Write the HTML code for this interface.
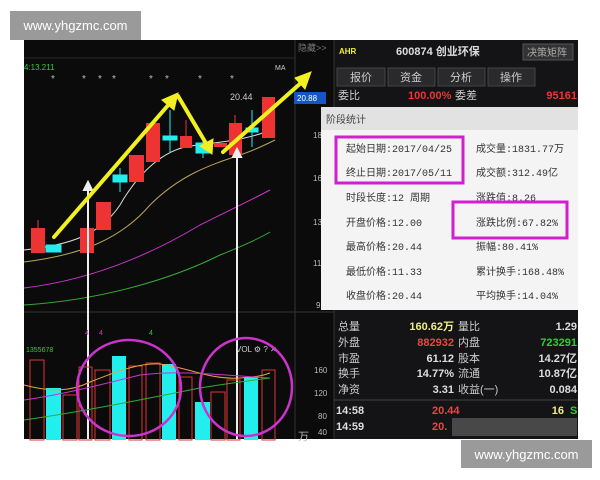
<!DOCTYPE html>
<html><head><meta charset="utf-8"><style>
body{margin:0;width:600px;height:480px;background:#fff;overflow:hidden;position:relative;font-family:"Liberation Sans","Noto Sans CJK SC",sans-serif}
.wm{position:absolute;background:#9a9a9a;color:#fff;font-size:13px;display:flex;align-items:center;justify-content:center}
svg{position:absolute;left:0;top:0}
</style></head><body>
<div class="wm" style="left:10px;top:11px;width:131px;height:29px">www.yhgzmc.com</div>
<svg width="600" height="480" viewBox="0 0 600 480" font-family="Liberation Sans, Noto Sans CJK SC, sans-serif">
<rect x="24" y="40" width="554" height="399" fill="#0b0b0c"/>
<rect x="334" y="40" width="244" height="399" fill="#141416"/>
<line x1="295" y1="40" x2="295" y2="439" stroke="#333" />
<line x1="334" y1="40" x2="334" y2="439" stroke="#333" />
<line x1="24" y1="58" x2="295" y2="58" stroke="#2a2a2a"/>
<line x1="24" y1="312" x2="334" y2="312" stroke="#333"/>
<!-- top chart texts -->
<text x="24" y="70" fill="#3c3" font-size="8">4:13.211</text>
<text x="275" y="70" fill="#ccc" font-size="7">MA</text>
<g fill="#bbb" font-size="10"><text x="51" y="82">*</text><text x="82" y="82">*</text><text x="98" y="82">*</text><text x="112" y="82">*</text><text x="149" y="82">*</text><text x="165" y="82">*</text><text x="198" y="82">*</text><text x="230" y="82">*</text></g>
<text x="230" y="100" fill="#ccc" font-size="9">20.44</text>
<!-- MA lines -->
<path d="M24 250 C70 245 100 235 120 205 C140 170 165 150 190 146 C220 142 250 140 275 128" stroke="#ddd" fill="none" stroke-width="1"/>
<path d="M24 262 C80 255 120 240 150 205 C180 175 210 165 240 155 C255 150 265 145 275 140" stroke="#b9a25a" fill="none"/>
<path d="M24 288 C90 280 150 255 200 225 C230 210 255 198 270 190" stroke="#c3c" fill="none"/>
<path d="M24 305 C100 300 170 280 220 255 C245 245 260 238 270 232" stroke="#3a3" fill="none"/>
<!-- candles -->
<g fill="#e33">
<rect x="31" y="228" width="14" height="25"/><line x1="38" y1="220" x2="38" y2="228" stroke="#e33"/>
<rect x="80" y="228" width="14" height="25"/>
<rect x="96" y="202" width="15" height="28"/>
<rect x="129" y="155" width="15" height="27"/>
<rect x="146" y="123" width="14" height="39"/>
<rect x="180" y="136" width="12" height="12"/><line x1="186" y1="120" x2="186" y2="148" stroke="#e33"/>
<rect x="214" y="143" width="13" height="4"/>
<rect x="229" y="123" width="13" height="32"/><line x1="235" y1="115" x2="235" y2="123" stroke="#e33"/>
<rect x="262" y="97" width="13" height="41"/>
</g>
<g fill="#2ee" stroke="#2ee">
<rect x="46" y="245" width="15" height="7"/>
<line x1="120" y1="168" x2="120" y2="192"/><rect x="113" y="175" width="14" height="7"/>
<line x1="170" y1="110" x2="170" y2="153"/><rect x="163" y="136" width="14" height="4"/>
<rect x="196" y="143" width="14" height="10"/><line x1="203" y1="140" x2="203" y2="158"/>
<line x1="252" y1="110" x2="252" y2="147"/><rect x="246" y="128" width="12" height="4"/>
</g>
<!-- white arrows -->
<g stroke="#eee" stroke-width="2" fill="#eee">
<line x1="88" y1="188" x2="88" y2="439"/><path d="M84 190 L88 182 L92 190Z"/>
<line x1="237" y1="155" x2="237" y2="439"/><path d="M233 157 L237 149 L241 157Z"/>
</g>
<!-- yellow arrows -->
<g stroke="#f2f020" stroke-width="4" fill="#f2f020" stroke-linecap="round">
<line x1="54" y1="237" x2="170" y2="103"/><path d="M162 100 L178 93 L174 110Z" stroke-width="1"/>
<line x1="178" y1="96" x2="207" y2="145"/><path d="M200 146 L212 154 L213 139Z" stroke-width="1"/>
<line x1="223" y1="152" x2="302" y2="82"/><path d="M295 78 L311 72 L305 89Z" stroke-width="1"/>
</g>
<!-- right axis -->
<text x="298" y="51" fill="#777" font-size="9">隐藏&gt;&gt;</text>
<rect x="294" y="92" width="32" height="12" fill="#1456c8"/><text x="297" y="101" fill="#fff" font-size="8">20.88</text>
<g fill="#bbb" font-size="8"><text x="313" y="138">18</text><text x="313" y="181">16</text><text x="313" y="225">13</text><text x="313" y="266">11</text><text x="316" y="308">9</text>
<text x="314" y="373">160</text><text x="314" y="396">120</text><text x="318" y="419">80</text><text x="318" y="435">40</text></g>
<text x="298" y="440" fill="#bbb" font-size="11">万</text>
<!-- volume -->
<text x="26" y="352" fill="#3c3" font-size="7">1355678</text>
<g font-size="7"><text x="85" y="335" fill="#c3c">4</text><text x="99" y="335" fill="#c3c">4</text><text x="149" y="335" fill="#3c3">4</text></g>
<text x="236" y="352" fill="#ccc" font-size="8">VOL ⚙ ? ✕</text>
<g fill="none" stroke="#d33">
<rect x="30" y="360" width="14" height="80"/><rect x="63" y="395" width="14" height="45"/><rect x="79" y="367" width="13" height="73"/><rect x="95" y="370" width="15" height="70"/><rect x="129" y="366" width="13" height="74"/><rect x="146" y="363" width="14" height="77"/><rect x="179" y="377" width="13" height="63"/><rect x="211" y="392" width="14" height="48"/><rect x="227" y="380" width="13" height="60"/><rect x="262" y="370" width="13" height="70"/>
</g>
<g fill="#2ee"><rect x="46" y="388" width="15" height="52"/><rect x="112" y="356" width="14" height="84"/><rect x="162" y="364" width="14" height="76"/><rect x="195" y="402" width="15" height="38"/><rect x="244" y="377" width="14" height="63"/></g>
<path d="M24 385 C50 392 70 392 90 382 C120 370 140 363 160 364 C190 368 210 380 240 378 C255 377 262 376 270 373" stroke="#e8a040" fill="none"/>
<path d="M24 400 C60 395 100 385 140 375 C180 370 220 375 270 378" stroke="#c3c" fill="none"/>
<path d="M24 420 C80 412 140 400 200 388 C230 383 255 380 270 378" stroke="#3a3" fill="none"/>
<g fill="none" stroke="#c3c" stroke-width="2.5"><ellipse cx="129" cy="388" rx="52" ry="48"/><ellipse cx="246" cy="387" rx="46" ry="49"/></g>
<!-- right header -->
<text x="339" y="54" fill="#ee3" font-size="8" font-weight="bold">AHR</text>
<text x="396" y="55" fill="#ddd" font-size="11" font-weight="bold">600874 创业环保</text>
<rect x="523" y="44" width="50" height="16" fill="#333" stroke="#555"/><text x="527" y="56" fill="#aaa" font-size="10">决策矩阵</text>
<g fill="#2a2a2c" stroke="#444"><rect x="337" y="68" width="48" height="18"/><rect x="388" y="68" width="47" height="18"/><rect x="438" y="68" width="47" height="18"/><rect x="488" y="68" width="47" height="18"/></g>
<g fill="#ccc" font-size="11"><text x="350" y="81">报价</text><text x="400" y="81">资金</text><text x="450" y="81">分析</text><text x="500" y="81">操作</text></g>
<text x="338" y="99" fill="#ccc" font-size="11">委比</text>
<text x="408" y="99" fill="#e33" font-size="11" font-weight="bold">100.00%</text><text x="455" y="99" fill="#ccc" font-size="11">委差</text>
<text x="577" y="99" fill="#e33" font-size="11" font-weight="bold" text-anchor="end">95161</text>
<!-- lower table -->
<g font-size="11">
<text x="338" y="330" fill="#ccc">总量</text><text x="454" y="330" fill="#ee8" text-anchor="end" font-weight="bold">160.62万</text><text x="458" y="330" fill="#ccc">量比</text><text x="577" y="330" fill="#ddd" text-anchor="end" font-weight="bold">1.29</text>
<text x="338" y="346" fill="#ccc">外盘</text><text x="454" y="346" fill="#e44" text-anchor="end" font-weight="bold">882932</text><text x="458" y="346" fill="#ccc">内盘</text><text x="577" y="346" fill="#3c3" text-anchor="end" font-weight="bold">723291</text>
<text x="338" y="362" fill="#ccc">市盈</text><text x="454" y="362" fill="#ddd" text-anchor="end" font-weight="bold">61.12</text><text x="458" y="362" fill="#ccc">股本</text><text x="577" y="362" fill="#ddd" text-anchor="end" font-weight="bold">14.27亿</text>
<text x="338" y="377" fill="#ccc">换手</text><text x="454" y="377" fill="#ddd" text-anchor="end" font-weight="bold">14.77%</text><text x="458" y="377" fill="#ccc">流通</text><text x="577" y="377" fill="#ddd" text-anchor="end" font-weight="bold">10.87亿</text>
<text x="338" y="393" fill="#ccc">净资</text><text x="454" y="393" fill="#ddd" text-anchor="end" font-weight="bold">3.31</text><text x="458" y="393" fill="#ccc">收益(一)</text><text x="577" y="393" fill="#ddd" text-anchor="end" font-weight="bold">0.084</text>
<text x="336" y="414" fill="#ddd" font-weight="bold">14:58</text><text x="432" y="414" fill="#e44" font-weight="bold">20.44</text><text x="564" y="414" fill="#ee8" font-weight="bold" text-anchor="end">16</text><text x="570" y="414" fill="#3c3" font-weight="bold">S</text>
<text x="336" y="430" fill="#ddd" font-weight="bold">14:59</text><text x="432" y="430" fill="#e44" font-weight="bold">20.</text>
</g>
<line x1="334" y1="400" x2="578" y2="400" stroke="#444"/>
<rect x="452" y="418" width="125" height="18" fill="#555" opacity="0.8"/>
<!-- popup -->
<rect x="321" y="107" width="257" height="203" fill="#f4f4f4"/>
<rect x="321" y="107" width="257" height="23" fill="#e2e2e2"/>
<text x="326" y="123" fill="#444" font-size="10">阶段统计</text>
<g font-size="10" fill="#333" font-family="Liberation Mono, Noto Sans CJK SC, monospace">
<text x="346" y="152">起始日期:2017/04/25</text><text x="476" y="152">成交量:1831.77万</text>
<text x="346" y="176">终止日期:2017/05/11</text><text x="476" y="176">成交额:312.49亿</text>
<text x="346" y="201">时段长度:12 周期</text><text x="476" y="201">涨跌值:8.26</text>
<text x="346" y="226">开盘价格:12.00</text><text x="476" y="226">涨跌比例:67.82%</text>
<text x="346" y="250">最高价格:20.44</text><text x="476" y="250">振幅:80.41%</text>
<text x="346" y="275">最低价格:11.33</text><text x="476" y="275">累计换手:168.48%</text>
<text x="346" y="299">收盘价格:20.44</text><text x="476" y="299">平均换手:14.04%</text>
</g>
<g fill="none" stroke="#d020d0" stroke-width="3"><rect x="336" y="137" width="127" height="46"/><rect x="453" y="202" width="114" height="36"/></g>
</svg>
<div class="wm" style="left:461px;top:440px;width:131px;height:28px">www.yhgzmc.com</div>
</body></html>
